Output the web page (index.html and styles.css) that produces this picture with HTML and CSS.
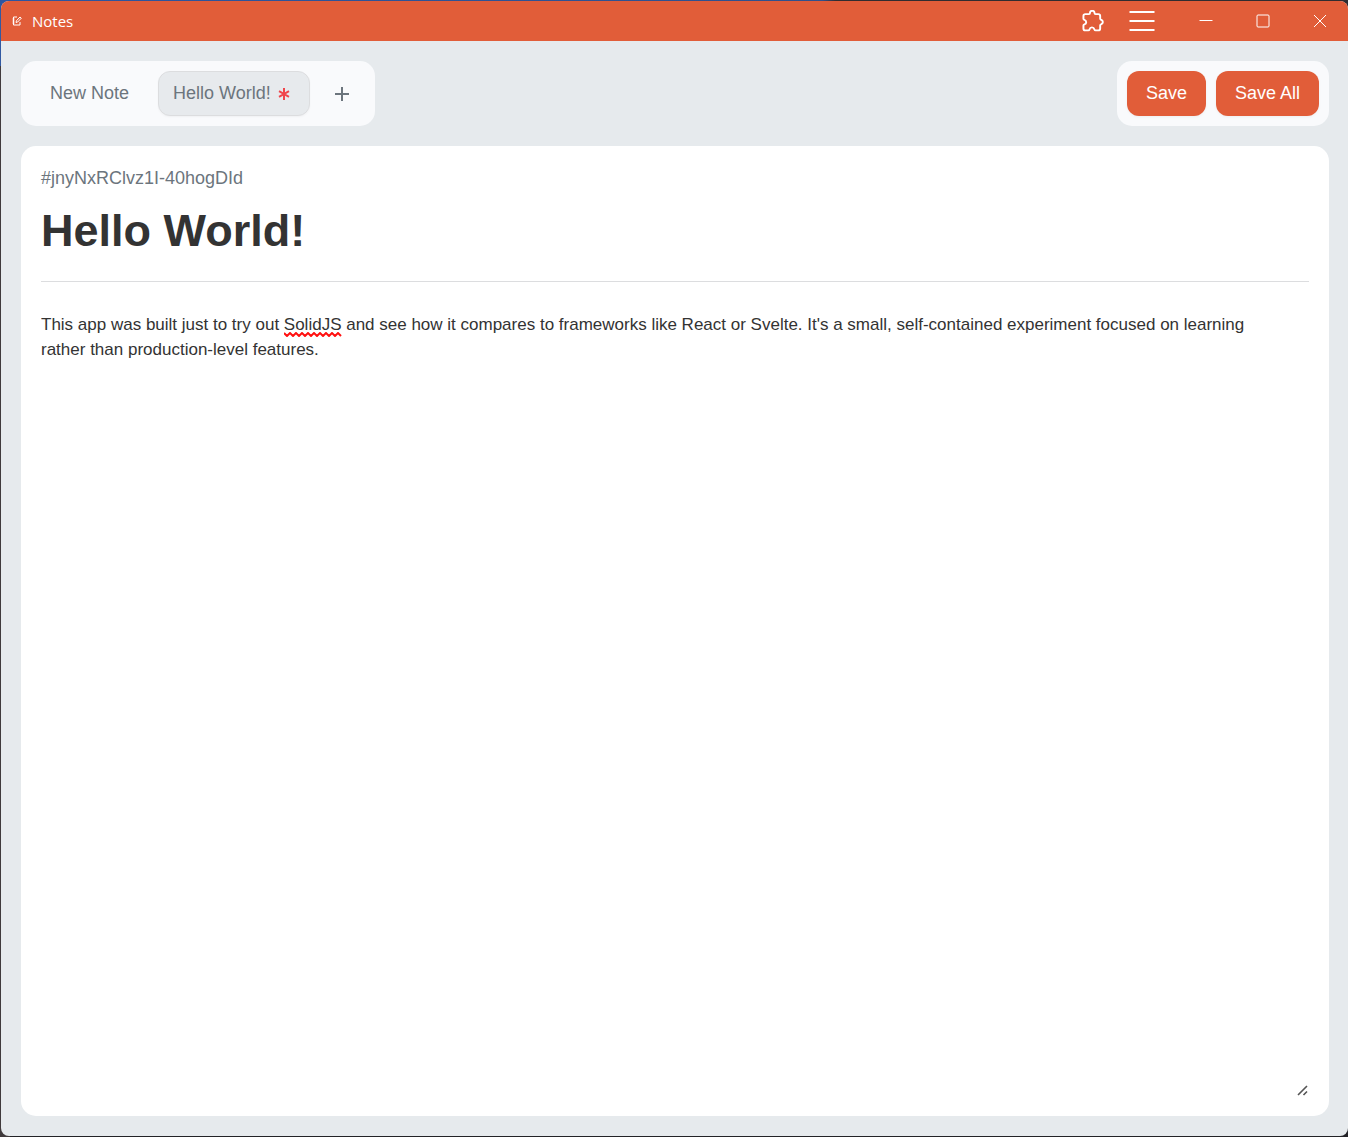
FILE: index.html
```html
<!DOCTYPE html>
<html lang="en">
<head>
  <meta charset="utf-8">
  <meta name="viewport" content="width=device-width, initial-scale=1">
  <title>Notes</title>
  <link rel="stylesheet" href="styles.css">
</head>
<body>
  <div class="window">
    <header class="titlebar">
      <div class="brand">
        <svg class="brand-icon" viewBox="0 0 10 10" aria-hidden="true">
          <path d="M5 1H1.500V9H8V6"/><path d="M.5 3h2M.5 5h2M.5 7h2"/><path d="M4 6.500L4.400 4.800 8 1l1.300 1.200L5.700 6z"/>
        </svg>
        <span class="brand-name">Notes</span>
      </div>
      <div class="window-controls">
        <button class="title-button" type="button" aria-label="Extensions">
          <svg class="icon-puzzle" viewBox="1 1 23 23" aria-hidden="true">
            <path d="M4.500 5.300H8.300C9 5.300 9.300 4.900 9.300 4.200C9.300 2.700 10.300 1.800 11.700 1.800S14.100 2.700 14.100 4.200C14.100 4.900 14.500 5.300 15.200 5.300H18C19.200 5.300 20 6.100 20 7.300V10C20 10.700 20.300 11 20.900 11.200C22.200 11.600 22.800 12.400 22.800 13.600S22.200 15.600 20.900 16C20.300 16.200 20 16.500 20 17.200V20.300C20 21.500 19.200 22.300 18 22.300H15.200C14.500 22.300 14.200 22 14 21.300C13.600 19.900 12.800 19.200 11.400 19.200S9.200 19.900 8.800 21.300C8.600 22 8.300 22.300 7.600 22.300H4.500C3.300 22.300 2.500 21.500 2.500 20.300V17.300C2.500 16.600 2.800 16.300 3.500 16.100C4.700 15.700 5.400 14.900 5.400 13.700S4.700 11.700 3.500 11.300C2.800 11.100 2.500 10.800 2.500 10.100V7.300C2.500 6.100 3.300 5.300 4.500 5.300Z"/>
          </svg>
        </button>
        <button class="title-button" type="button" aria-label="Menu">
          <svg class="icon-menu" viewBox="0 0 26 20" aria-hidden="true"><path d="M.5 1h25M.5 10h25M.5 19h25"/></svg>
        </button>
        <button class="system-button" type="button" aria-label="Minimize">
          <svg class="icon-system" viewBox="0 0 14 14" aria-hidden="true"><path d="M.5 6.500h13"/></svg>
        </button>
        <button class="system-button" type="button" aria-label="Maximize">
          <svg class="icon-system" viewBox="0 0 14 14" aria-hidden="true"><rect x="1" y="1" width="12" height="12" rx="1"/></svg>
        </button>
        <button class="system-button" type="button" aria-label="Close">
          <svg class="icon-system" viewBox="0 0 14 14" aria-hidden="true"><path d="M1 1l12 12M13 1L1 13"/></svg>
        </button>
      </div>
    </header>

    <main class="workspace">
      <div class="toolbar">
        <nav class="panel" aria-label="Open notes">
          <button class="tab" type="button">New Note</button>
          <button class="tab tab-active" type="button" aria-current="true">
            Hello World!
            <svg class="icon-unsaved" viewBox="0 0 12 14" role="img" aria-label="Unsaved"><path d="M6 1v12M1 4.200l10 5.600M11 4.200L1 9.800"/></svg>
          </button>
          <button class="tab-add" type="button" aria-label="Add note">
            <svg class="icon-plus" viewBox="0 0 14 14" aria-hidden="true"><path d="M7 0v14M0 7h14"/></svg>
          </button>
        </nav>
        <div class="panel">
          <button class="action" type="button">Save</button>
          <button class="action" type="button">Save All</button>
        </div>
      </div>

      <article class="note">
        <div class="note-id">#jnyNxRClvz1I-40hogDId</div>
        <input class="note-title" type="text" aria-label="Title" value="Hello World!">
        <div class="note-content">
          <textarea class="note-body" aria-label="Note text" spellcheck="false">This app was built just to try out SolidJS and see how it compares to frameworks like React or Svelte. It's a small, self-contained experiment focused on learning rather than production-level features.</textarea>
          <svg class="spelling" viewBox="0 0 58 5" aria-hidden="true">
            <path d="M0 1l3 3 3-3 3 3 3-3 3 3 3-3 3 3 3-3 3 3 3-3 3 3 3-3 3 3 3-3 3 3 3-3 3 3 3-3 3 3"/>
          </svg>
        </div>
      </article>
    </main>
  </div>
</body>
</html>
```
FILE: styles.css
```css
:root {
  --accent: #e15d39;
  --surface: #e6eaed;
  --panel: #f9fafc;
  --muted: #6c757d;
  --text: #333333;
  --line: #dcdddf;
}

* {
  box-sizing: border-box;
}

body {
  margin: 0;
  min-height: 100vh;
  display: flex;
  padding: 1px 0 1px 1px;
  background:
    linear-gradient(90deg, #2d55a0 0, #30508c 61%, #302c30 62%) top / 100% 10px no-repeat,
    linear-gradient(#3159a2 66px, #403a3c 66px) left / 10px 100% no-repeat,
    #222226;
  font-family: "Liberation Sans", Arial, sans-serif;
  font-size: 18px;
  color: var(--text);
}

button,
input,
textarea {
  margin: 0;
  padding: 0;
  border: 0;
  background: none;
  font: inherit;
  color: inherit;
}

svg {
  display: block;
  flex: none;
  fill: none;
  stroke: currentColor;
}

.window {
  flex: 1;
  min-width: 0;
  display: flex;
  flex-direction: column;
  overflow: hidden;
  border-radius: 8px;
  background: var(--surface);
}

.titlebar {
  display: flex;
  justify-content: space-between;
  height: 40px;
  background: var(--accent);
  color: #ffffff;
}

.brand {
  display: flex;
  align-items: center;
  gap: 10px;
  padding: 0 0 1px 11px;
}

.brand-icon {
  width: 10px;
  height: 10px;
}

.brand-name {
  font-family: "Open Sans", "Noto Sans", sans-serif;
  font-size: 15px;
  line-height: 20px;
}

.window-controls {
  display: flex;
}

.title-button,
.system-button {
  display: flex;
  align-items: center;
  justify-content: center;
}

.title-button {
  width: 49px;
}

.system-button {
  width: 57px;
}

.system-button:nth-child(3) {
  margin-left: 11px;
}

.icon-puzzle {
  width: 22px;
  height: 22px;
  stroke-width: 2;
}

.icon-menu {
  width: 26px;
  height: 20px;
  stroke-width: 2;
}

.icon-system {
  width: 14px;
  height: 14px;
}

.workspace {
  flex: 1;
  display: flex;
  flex-direction: column;
  gap: 20px;
  padding: 20px 19px 20px 20px;
}

.toolbar {
  display: flex;
  justify-content: space-between;
  gap: 20px;
}

.panel {
  display: flex;
  gap: 10px;
  padding: 10px;
  border-radius: 15px;
  background: var(--panel);
}

.tab,
.tab-add,
.action {
  display: flex;
  align-items: center;
  justify-content: center;
  height: 45px;
  border-radius: 12px;
  line-height: 24px;
}

.tab,
.tab-add {
  color: var(--muted);
}

.tab,
.action {
  padding: 0 19px 1px;
}

.tab-active {
  gap: 7px;
  padding-left: 14px;
  border: 1px solid var(--line);
  background: #e7eaed;
  box-shadow: 0 1px 2px rgba(0, 0, 0, 0.04);
}

.icon-unsaved {
  width: 12px;
  height: 14px;
  margin-top: 2px;
  color: #f0464c;
  stroke-width: 2;
}

.tab-add {
  width: 45px;
}

.icon-plus {
  width: 14px;
  height: 14px;
  stroke-width: 2;
}

.action {
  background: var(--accent);
  color: #ffffff;
  box-shadow: 0 1px 3px rgba(0, 0, 0, 0.05);
}

.note {
  flex: 1;
  display: flex;
  flex-direction: column;
  padding: 20px;
  border-radius: 15px;
  background: #ffffff;
}

.note-id {
  line-height: 24px;
  color: var(--muted);
}

.note-title {
  width: 100%;
  height: 60px;
  margin-top: 11px;
  font-size: 45px;
  font-weight: 700;
}

.note-content {
  position: relative;
  flex: 1;
  display: flex;
  margin-top: 20px;
  border-top: 1px solid var(--line);
}

.note-body {
  flex: 1;
  padding: 30px 30px 0 0;
  font-size: 17px;
  line-height: 25px;
  outline: none;
  resize: both;
}

.note-body::-webkit-resizer {
  background: url("data:image/svg+xml,%3Csvg xmlns='http://www.w3.org/2000/svg' width='15' height='15' fill='none' stroke='%23555' stroke-width='1.6'%3E%3Cpath d='M4 14l9-9M9.500 14l3.500-3.500'/%3E%3C/svg%3E") no-repeat;
}

.spelling {
  position: absolute;
  top: 50px;
  left: 243px;
  width: 58px;
  height: 5px;
  color: #ff1010;
  stroke-width: 2;
  pointer-events: none;
}
```
